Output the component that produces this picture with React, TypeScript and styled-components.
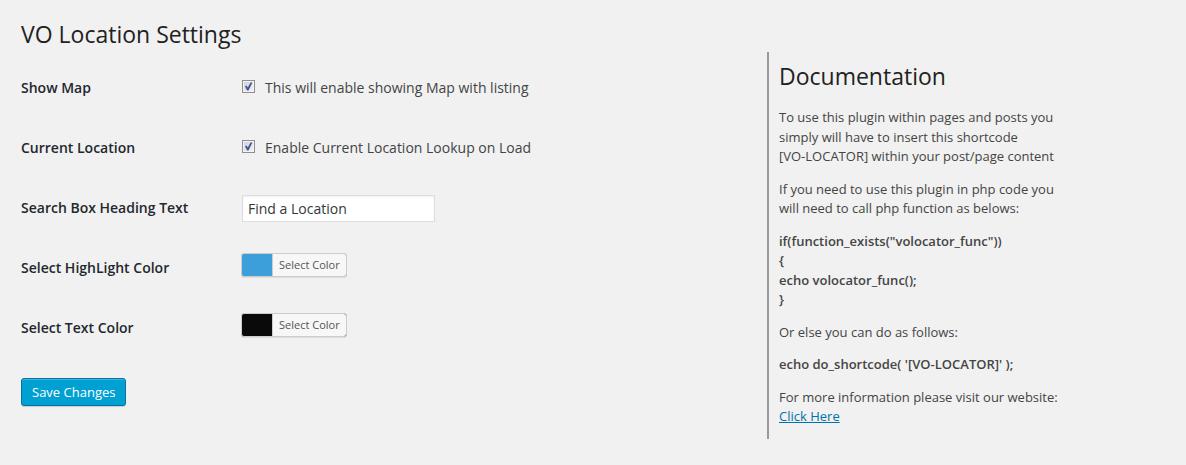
import React, { useState } from "react";
import styled, { createGlobalStyle } from "styled-components";

const GlobalStyle = createGlobalStyle`
  *, *::before, *::after { box-sizing: border-box; }
  html { background: #f1f1f1; }
  body {
    margin: 0;
    background: #f1f1f1;
    color: #444;
    font-family: "Open Sans", sans-serif;
    font-size: 13px;
    line-height: 1.5;
  }
  button, input { font-family: inherit; margin: 0; }
`;

const Page = styled.div`
  display: grid;
  grid-template-columns: minmax(0, 1fr) 399px;
  align-items: start;
  padding: 20px 20px 24px 21px;
`;

const Heading = styled.h2`
  margin: 0;
  color: #222;
  font-size: 23px;
  font-weight: 400;
  line-height: 29px;
`;

const SettingsForm = styled.form`
  display: flex;
  flex-direction: column;
  align-items: flex-start;
`;

const Fields = styled.div`
  display: flex;
  flex-direction: column;
  width: 100%;
  padding: 9px 0 20px;
`;

const Row = styled.div`
  display: grid;
  grid-template-columns: 220px minmax(0, 1fr);
  align-items: center;
  height: 60px;
`;

const RowTitle = styled.label`
  color: #23282d;
  font-size: 14px;
  font-weight: 600;
  line-height: 20px;
`;

const CheckLabel = styled.label`
  display: flex;
  align-items: center;
  gap: 10px;
  color: #444;
  font-size: 14px;
  line-height: 20px;
`;

const CheckBox = styled.span`
  display: grid;
  width: 13px;
  height: 13px;
  margin: 0 0 4px 1px;
  > * { grid-area: 1 / 1; }
  svg { pointer-events: none; }
`;

const CheckInput = styled.input`
  appearance: none;
  width: 13px;
  height: 13px;
  border: 1px solid #8e8f8f;
  background: linear-gradient(135deg, #cbcfd5, #f6f6f6);
  box-shadow: inset 0 0 0 1px #f4f4f4;
`;

const TextInput = styled.input`
  width: 193px;
  height: 27px;
  margin-left: 1px;
  padding: 2px 5px;
  border: 1px solid #ddd;
  border-radius: 0;
  background: #fff;
  box-shadow: inset 0 1px 2px rgba(0, 0, 0, 0.07);
  color: #32373c;
  font-size: 14px;
`;

const ColorButton = styled.button<{ $color: string }>`
  display: flex;
  height: 24px;
  margin-bottom: 6px;
  padding: 0 0 0 30px;
  border: 1px solid #ccc;
  border-radius: 3px;
  background: ${(p) => p.$color};
  box-shadow: 0 1px 0 rgba(0, 0, 0, 0.08);
  cursor: pointer;
`;

const ColorButtonText = styled.span`
  padding: 0 6px;
  border-left: 1px solid #ccc;
  border-radius: 0 2px 2px 0;
  background: #f7f7f7;
  color: #555;
  font-size: 11px;
  line-height: 22px;
`;

const SaveButton = styled.button`
  height: 28px;
  padding: 0 10px;
  border: 1px solid #0073aa;
  border-radius: 3px;
  background: #00a0d2;
  box-shadow: inset 0 1px 0 rgba(120, 200, 230, 0.5), 0 1px 0 rgba(0, 0, 0, 0.15);
  color: #fff;
  font-size: 13px;
  line-height: 26px;
  cursor: pointer;
`;

const Documentation = styled.aside`
  margin-top: 32px;
  padding: 10px 100px 12px 10px;
  border-left: 2px solid #999;
`;

const DocText = styled.div`
  display: flex;
  flex-direction: column;
  gap: 13px;
  margin-top: 17px;
`;

const Paragraph = styled.p`
  margin: 0;
`;

const Code = styled(Paragraph)`
  font-weight: 600;
`;

const Shortcode = styled.span`
  white-space: nowrap;
`;

const DocLink = styled.a`
  color: #0073aa;
`;

function Check({ id, text }: { id: string; text: string }) {
  const [checked, setChecked] = useState(true);
  return (
    <CheckLabel>
      <CheckBox>
        <CheckInput id={id} type="checkbox" checked={checked} onChange={() => setChecked(!checked)} />
        {checked && (
          <svg width="13" height="13" viewBox="0 0 13 13" aria-hidden="true">
            <path d="M3 6.2L4.6 5.4L5.8 7.4L8.5 2.6L10.4 2.6L6.5 10.4L5.1 10.4Z" fill="#42549b" />
          </svg>
        )}
      </CheckBox>
      {text}
    </CheckLabel>
  );
}

function ColorPicker({ id, color }: { id: string; color: string }) {
  return (
    <div>
      <ColorButton id={id} type="button" $color={color}>
        <ColorButtonText>Select Color</ColorButtonText>
      </ColorButton>
    </div>
  );
}

export default function App() {
  return (
    <>
      <GlobalStyle />
      <Page>
        <SettingsForm onSubmit={(e) => e.preventDefault()}>
          <Heading as="h1">VO Location Settings</Heading>
          <Fields>
            <Row>
              <RowTitle htmlFor="show-map">Show Map</RowTitle>
              <Check id="show-map" text="This will enable showing Map with listing" />
            </Row>
            <Row>
              <RowTitle htmlFor="current-location">Current Location</RowTitle>
              <Check id="current-location" text="Enable Current Location Lookup on Load" />
            </Row>
            <Row>
              <RowTitle htmlFor="heading-text">Search Box Heading Text</RowTitle>
              <TextInput id="heading-text" type="text" defaultValue="Find a Location" />
            </Row>
            <Row>
              <RowTitle htmlFor="highlight-color">Select HighLight Color</RowTitle>
              <ColorPicker id="highlight-color" color="#3c9fd9" />
            </Row>
            <Row>
              <RowTitle htmlFor="text-color">Select Text Color</RowTitle>
              <ColorPicker id="text-color" color="#0a0a0a" />
            </Row>
          </Fields>
          <SaveButton type="submit">Save Changes</SaveButton>
        </SettingsForm>
        <Documentation>
          <Heading>Documentation</Heading>
          <DocText>
            <Paragraph>
              To use this plugin within pages and posts you simply will have to insert this shortcode{" "}
              <Shortcode>[VO-LOCATOR]</Shortcode> within your post/page content
            </Paragraph>
            <Paragraph>
              If you need to use this plugin in php code you will need to call php function as belows:
            </Paragraph>
            <Code>
              if(function_exists("volocator_func"))
              <br />
              {"{"}
              <br />
              echo volocator_func();
              <br />
              {"}"}
            </Code>
            <Paragraph>Or else you can do as follows:</Paragraph>
            <Code>echo do_shortcode( '[VO-LOCATOR]' );</Code>
            <Paragraph>
              For more information please visit our website: <DocLink href="#">Click Here</DocLink>
            </Paragraph>
          </DocText>
        </Documentation>
      </Page>
    </>
  );
}
